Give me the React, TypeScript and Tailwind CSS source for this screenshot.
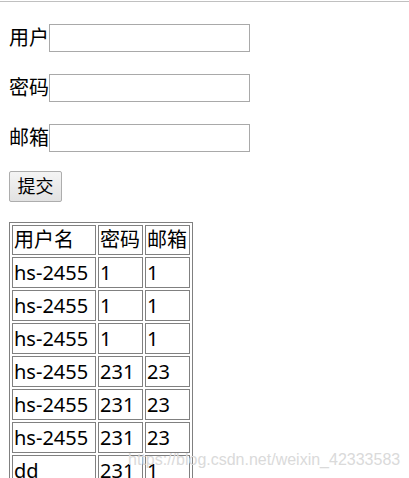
import React from 'react';

const rows: [string, string, string][] = [
  ['hs-2455', '1', '1'],
  ['hs-2455', '1', '1'],
  ['hs-2455', '1', '1'],
  ['hs-2455', '231', '23'],
  ['hs-2455', '231', '23'],
  ['hs-2455', '231', '23'],
  ['dd', '231', '1'],
  ['dd', '231', '1'],
];

const fields = ['用户', '密码', '邮箱'];

const App: React.FC = () => {
  return (
    <div className="relative w-[409px] h-[478px] overflow-hidden bg-white text-black font-['Noto_Sans','Noto_Sans_CJK_SC',sans-serif]">
      <div className="mt-px h-px bg-[#c0c0c0]" />

      <div className="px-[9px] pt-[22px]">
        <div className="flex flex-col gap-[22px]">
          {fields.map((label) => (
            <div key={label} className="flex items-center h-[28px]">
              <span className="text-[20px] leading-[28px] w-[40px] whitespace-nowrap">{label}</span>
              <input
                type="text"
                className="w-[201px] h-[28px] border border-[#a9a9a9] bg-white outline-none"
              />
            </div>
          ))}
        </div>

        <button className="mt-[19px] w-[53px] h-[31px] border border-[#adadad] rounded-[2px] bg-gradient-to-b from-[#f4f4f4] to-[#e2e2e2] text-[18px] leading-[29px]">
          提交
        </button>

        <table className="mt-[20px] table-fixed w-[184px] border-separate border-spacing-[2px] border border-[#808080]">
          <tbody>
            <tr>
              <td className="w-[84px] h-[30px] border border-[#808080] p-px text-[20px] leading-[26px] whitespace-nowrap">用户名</td>
              <td className="w-[45px] h-[30px] border border-[#808080] p-px text-[20px] leading-[26px] whitespace-nowrap">密码</td>
              <td className="w-[45px] h-[30px] border border-[#808080] p-px text-[20px] leading-[26px] whitespace-nowrap">邮箱</td>
            </tr>
            {rows.map((r, i) => (
              <tr key={i}>
                {r.map((c, j) => (
                  <td
                    key={j}
                    className="h-[31px] border border-[#808080] p-px text-[20px] leading-[27px] whitespace-nowrap overflow-hidden"
                  >
                    {c}
                  </td>
                ))}
              </tr>
            ))}
          </tbody>
        </table>
      </div>

      {/* watermark */}
      <div className="absolute left-[128px] top-[450px] text-[16px] leading-[20px] text-[#dadada] font-['Liberation_Sans',Arial,sans-serif] whitespace-nowrap">
        https://blog.csdn.net/weixin_42333583
      </div>
    </div>
  );
};

export default App;
